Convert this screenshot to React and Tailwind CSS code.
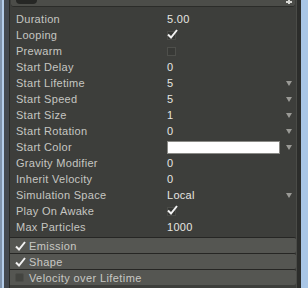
import React from "react";

const rows = [
  { label: "Duration", value: "5.00" },
  { label: "Looping", check: true },
  { label: "Prewarm", check: false },
  { label: "Start Delay", value: "0" },
  { label: "Start Lifetime", value: "5", arrow: true },
  { label: "Start Speed", value: "5", arrow: true },
  { label: "Start Size", value: "1", arrow: true },
  { label: "Start Rotation", value: "0", arrow: true },
  { label: "Start Color", color: true, arrow: true },
  { label: "Gravity Modifier", value: "0" },
  { label: "Inherit Velocity", value: "0" },
  { label: "Simulation Space", value: "Local", arrow: true },
  { label: "Play On Awake", check: true },
  { label: "Max Particles", value: "1000" },
];

const modules = [
  { label: "Emission", on: true },
  { label: "Shape", on: true },
  { label: "Velocity over Lifetime", on: false },
];

const Tick = () => (
  <svg width="11" height="10" viewBox="0 0 11 10" className="block">
    <path d="M1 5.5 L4 8.5 L10 1" fill="none" stroke="#f2f2f2" strokeWidth="2" />
  </svg>
);

const Arrow = () => (
  <div className="w-0 h-0 border-l-[3px] border-r-[3px] border-t-[5px] border-l-transparent border-r-transparent border-t-[#9a9a96]" />
);

const Row = ({ row }) => (
  <div className="flex items-center h-4">
    <div className="w-[157px] pl-[6px] text-[#c6c6c2] tracking-[0.3px]">{row.label}</div>
    <div className="flex-1 flex items-center">
      {row.value && <span className="text-[#e6e6e2] tracking-[0.3px]">{row.value}</span>}
      {row.check === true && (
        <div className="relative w-[9px] h-[9px] border border-[#4a4b47] bg-[#353633]">
          <div className="absolute -top-[3px] -left-[1px]"><Tick /></div>
        </div>
      )}
      {row.check === false && <div className="w-[9px] h-[9px] border border-[#4e4f4b] bg-[#383936]" />}
      {row.color && <div className="w-[113px] h-[13px] bg-white border border-[#8a8a86]" />}
    </div>
    <div className="w-[14px] flex justify-center">{row.arrow && <Arrow />}</div>
  </div>
);

const App = () => {
  return (
    <div className="w-[308px] h-[288px] flex bg-[#3d3e3b] overflow-hidden text-[11px] leading-4" style={{ fontFamily: '"Liberation Sans", Arial, sans-serif' }}>
      <div className="w-[2px] bg-[#7f93ad]" />
      <div className="w-[2px] bg-[#b4cdea]" />
      <div className="w-[5px] bg-[#43484f]" />
      <div className="w-[1px] bg-[#282926]" />
      <div className="w-[287px] flex flex-col">
        <div className="h-[7px] mx-[1px] bg-[#4c4d49] rounded-b-[3px] border-b border-[#2b2c29] relative">
          <div className="absolute left-[5px] top-0 w-[21px] h-[4px] rounded-b-full bg-[#262725]" />
          <div className="absolute right-[5px] top-0 w-[2px] h-[4px] bg-[#d8d8d4]" />
          <div className="absolute right-[3px] top-[1px] w-[6px] h-[2px] bg-[#d8d8d4]" />
        </div>
        <div className="pt-[4px] flex flex-col">
          {rows.map((r) => <Row key={r.label} row={r} />)}
        </div>
        <div className="mt-[2px] flex flex-col">
          {modules.map((m) => (
            <div key={m.label} className="h-4 border-t border-[#262624] bg-[#555652] flex items-center pl-[5px] gap-[4px] rounded-r-[2px]">
              {m.on ? <div className="w-[10px]"><Tick /></div> : <div className="w-[9px] h-[9px] mr-[1px] rounded-[2px] bg-[#434440] border border-[#4c4d49]" />}
              <span className="text-[#c8c8c4] tracking-[0.4px]">{m.label}</span>
            </div>
          ))}
        </div>
      </div>
      <div className="w-[1px] bg-[#4a4b47]" />
      <div className="w-[4px] bg-[#2c2d2b]" />
      <div className="w-[7px] bg-[#a9c6e6]" />
    </div>
  );
};

export default App;
